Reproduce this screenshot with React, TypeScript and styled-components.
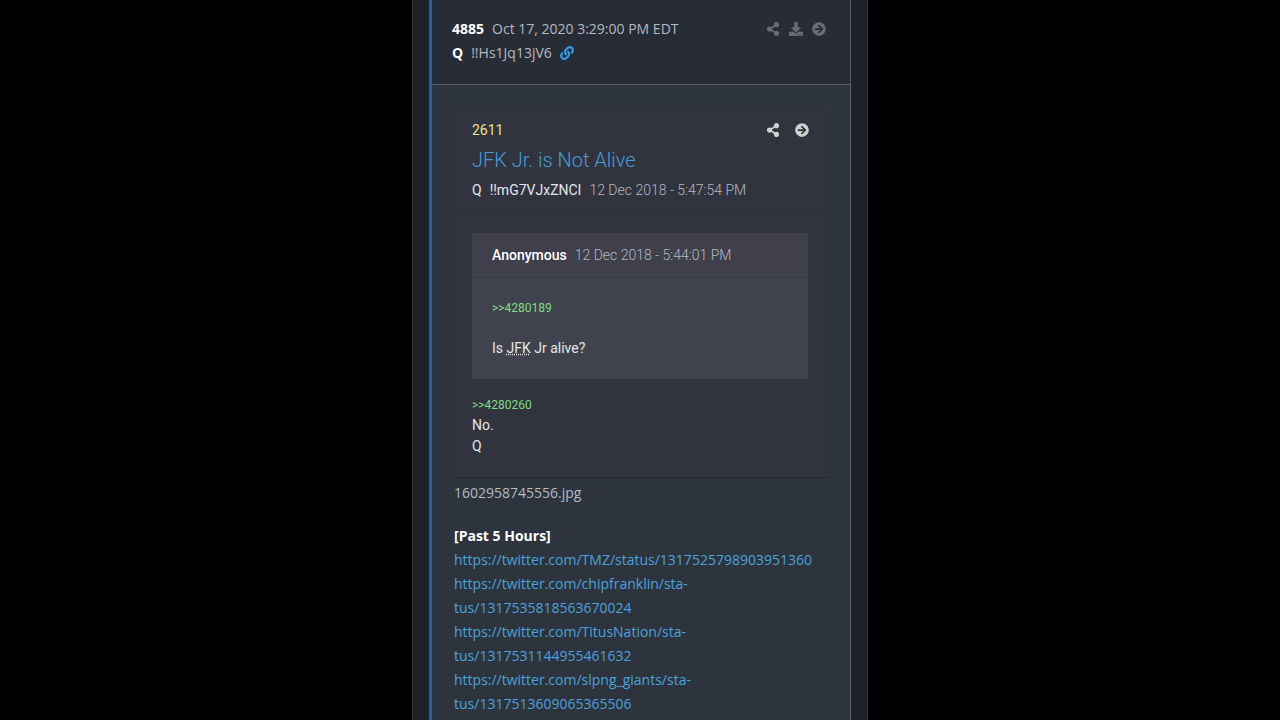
import React from 'react';
import styled, { createGlobalStyle } from 'styled-components';
import { FaShareAlt, FaLink, FaDownload, FaArrowCircleRight } from 'react-icons/fa';

const GlobalStyle = createGlobalStyle`
  *, *::before, *::after { box-sizing: border-box; }
  html, body { margin: 0; background: #000; }
  body {
    font-family: 'Open Sans', 'Noto Sans', sans-serif;
    font-size: 14px;
    line-height: 24px;
    color: #b4b9c2;
  }
`;

const Page = styled.div`
  height: 100vh;
  overflow: hidden;
  background: #000;
`;

const Column = styled.main`
  max-width: 456px;
  min-height: 100%;
  margin: 0 auto;
  padding: 0 16px;
  background: #1e2128;
  border: solid #2d3036;
  border-width: 0 1px;
`;

const Post = styled.article`
  min-height: 100vh;
  background: #2d343e;
  border-left: 3px solid #1c62ae;
  border-right: 1px solid #5a5f69;
`;

const PostHeader = styled.header`
  display: flex;
  justify-content: space-between;
  align-items: flex-start;
  padding: 17px 24px 19px 20px;
  background: #272c36;
  border-bottom: 1px solid #5a5f69;
`;

const Meta = styled.div`
  display: flex;
  align-items: center;
  gap: 8px;
`;

const Strong = styled.b`
  font-weight: 700;
  color: #fff;
`;

const Actions = styled.div<{ $gap: number; $height: number }>`
  display: flex;
  align-items: center;
  gap: ${(p) => p.$gap}px;
  height: ${(p) => p.$height}px;
`;

const IconButton = styled.button<{ $color: string }>`
  display: flex;
  padding: 0;
  border: 0;
  background: none;
  color: ${(p) => p.$color};
  font-size: 14px;
  cursor: pointer;
`;

const Anchor = styled.a`
  color: #4ba3dc;
  text-decoration: none;
`;

const IconLink = styled(Anchor)`
  display: flex;
  color: #2f9bea;
`;

const PostBody = styled.div`
  padding: 24px 22px 0;
`;

const Quote = styled.section`
  background: #31343f;
  border-bottom: 1px solid #22262f;
  font-family: Roboto, sans-serif;
  line-height: 20px;
  color: #e4e5e9;
`;

const QuoteHeader = styled.header`
  padding: 11px 19px 12px 18px;
  border-bottom: 1px solid #2c2f39;
`;

const QuoteTop = styled.div`
  display: flex;
  justify-content: space-between;
  align-items: center;
`;

const QuoteNumber = styled.span`
  color: #e8e58a;
`;

const QuoteTitle = styled.h2`
  margin: 4px 0;
  font-size: 20px;
  font-weight: 300;
  line-height: 32px;
  color: #459dd4;
`;

const Muted = styled.time`
  font-weight: 300;
  color: #b6b8c0;
`;

const QuoteBody = styled.div`
  padding: 20px 20px 20px 18px;
`;

const Reply = styled.section`
  margin-bottom: 16px;
  background: #40434d;
  border-radius: 3px;
`;

const ReplyHeader = styled.header`
  display: flex;
  gap: 8px;
  padding: 12px 20px;
  background: #3f404b;
  border-bottom: 1px solid #383a45;
  border-radius: 3px 3px 0 0;
`;

const Author = styled.span`
  font-weight: 500;
  color: #fff;
`;

const ReplyBody = styled.div`
  padding: 20px;
`;

const Paragraph = styled.p`
  margin: 0;
  line-height: 21px;
`;

const Question = styled(Paragraph)`
  margin-top: 20px;
`;

const Reference = styled.a`
  display: block;
  font-size: 12px;
  color: #7fdc86;
  text-decoration: none;
`;

const Abbr = styled.abbr`
  text-decoration: underline dotted;
`;

const FileName = styled.p`
  margin: 3px 0 19px;
`;

const Links = styled.ul`
  margin: 0;
  padding: 0;
  list-style: none;
`;

const links = [
  ['https://twitter.com/TMZ/status/1317525798903951360'],
  ['https://twitter.com/chipfranklin/sta-', 'tus/1317535818563670024'],
  ['https://twitter.com/TitusNation/sta-', 'tus/1317531144955461632'],
  ['https://twitter.com/slpng_giants/sta-', 'tus/1317513609065365506'],
];

export default function App() {
  return (
    <Page>
      <GlobalStyle />
      <Column>
        <Post>
          <PostHeader>
            <div>
              <Meta>
                <Strong>4885</Strong>
                <time>Oct 17, 2020 3:29:00 PM EDT</time>
              </Meta>
              <Meta>
                <Strong>Q</Strong>
                <span>!!Hs1Jq13jV6</span>
                <IconLink href="#4885" aria-label="Permalink"><FaLink /></IconLink>
              </Meta>
            </div>
            <Actions $gap={9} $height={24}>
              <IconButton $color="#686c75" aria-label="Share"><FaShareAlt /></IconButton>
              <IconButton $color="#686c75" aria-label="Download"><FaDownload /></IconButton>
              <IconButton $color="#686c75" aria-label="Open"><FaArrowCircleRight /></IconButton>
            </Actions>
          </PostHeader>
          <PostBody>
            <Quote>
              <QuoteHeader>
                <QuoteTop>
                  <QuoteNumber>2611</QuoteNumber>
                  <Actions $gap={15} $height={20}>
                    <IconButton $color="#cfd0cf" aria-label="Share quoted post"><FaShareAlt /></IconButton>
                    <IconButton $color="#cfd0cf" aria-label="Open quoted post"><FaArrowCircleRight /></IconButton>
                  </Actions>
                </QuoteTop>
                <QuoteTitle>JFK Jr. is Not Alive</QuoteTitle>
                <Meta>
                  <span>Q</span>
                  <span>!!mG7VJxZNCI</span>
                  <Muted>12 Dec 2018 - 5:47:54 PM</Muted>
                </Meta>
              </QuoteHeader>
              <QuoteBody>
                <Reply>
                  <ReplyHeader>
                    <Author>Anonymous</Author>
                    <Muted>12 Dec 2018 - 5:44:01 PM</Muted>
                  </ReplyHeader>
                  <ReplyBody>
                    <Reference href="#4280189">&gt;&gt;4280189</Reference>
                    <Question>Is <Abbr>JFK</Abbr> Jr alive?</Question>
                  </ReplyBody>
                </Reply>
                <Reference href="#4280260">&gt;&gt;4280260</Reference>
                <Paragraph>No.</Paragraph>
                <Paragraph>Q</Paragraph>
              </QuoteBody>
            </Quote>
            <FileName>1602958745556.jpg</FileName>
            <Strong>[Past 5 Hours]</Strong>
            <Links>
              {links.map((parts) => (
                <li key={parts.join('')}>
                  <Anchor href={parts.join('').replace('sta-tus', 'status')}>
                    {parts[0]}
                    {parts[1] && <><br />{parts[1]}</>}
                  </Anchor>
                </li>
              ))}
            </Links>
          </PostBody>
        </Post>
      </Column>
    </Page>
  );
}
